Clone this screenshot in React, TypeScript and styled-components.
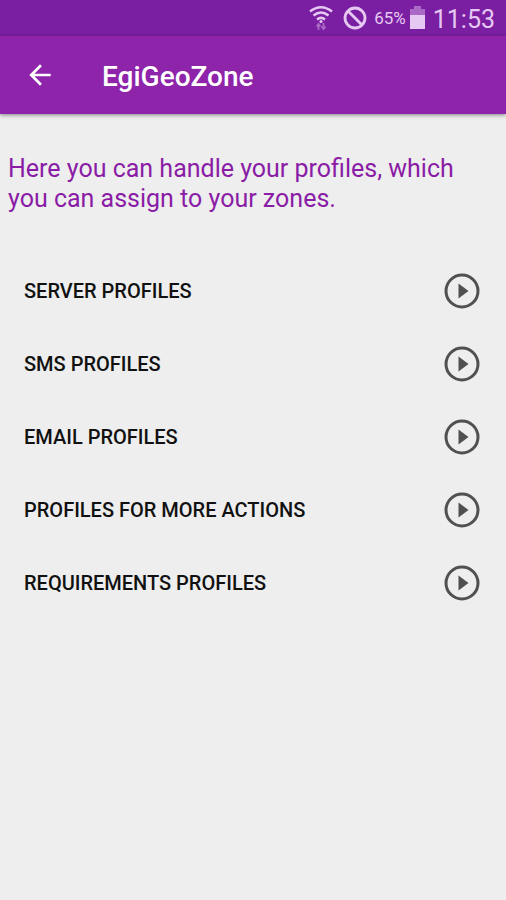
import React from "react";
import styled, { createGlobalStyle } from "styled-components";

const GlobalStyle = createGlobalStyle`
  *, *::before, *::after { box-sizing: border-box; }
  body {
    margin: 0;
    background: #eeeeee;
    font-family: Roboto, "Liberation Sans", sans-serif;
  }
`;

const Screen = styled.div`
  min-height: 100vh;
  background: #eeeeee;
`;

const StatusBar = styled.div`
  display: flex;
  align-items: center;
  justify-content: flex-end;
  height: 36px;
  padding: 0 11px;
  background: #7b1fa2;
  color: #e6c9f2;
`;

const StatusIcon = styled.svg<{ $gap: number }>`
  display: block;
  flex: none;
  margin-right: ${({ $gap }) => $gap}px;
`;

const BatteryLevel = styled.span`
  margin-right: 4px;
  font-size: 17px;
  line-height: 24px;
`;

const Clock = styled.time`
  padding-top: 4px;
  font-size: 25px;
  line-height: 32px;
`;

const AppBar = styled.header`
  display: flex;
  align-items: center;
  gap: 46px;
  height: 78px;
  padding: 0 24px;
  background: #8e24aa;
  color: #ffffff;
  box-shadow: 0 1px 4px rgba(0, 0, 0, 0.45);
`;

const BackButton = styled.button`
  display: flex;
  padding: 0;
  border: 0;
  background: none;
  color: inherit;
  cursor: pointer;
`;

const Title = styled.h1`
  margin: 0;
  padding-top: 4px;
  font-size: 28px;
  font-weight: 500;
  line-height: 32px;
`;

const Main = styled.main`
  padding: 40px 8px;
`;

const Intro = styled.p`
  margin: 0 0 40px;
  color: #8a1ca6;
  font-size: 25px;
  line-height: 30px;
`;

const ProfileList = styled.ul`
  margin: 0;
  padding: 0;
  list-style: none;
`;

const ProfileButton = styled.button`
  display: flex;
  align-items: center;
  justify-content: space-between;
  width: 100%;
  height: 73px;
  padding: 0 17px 0 16px;
  border: 0;
  background: none;
  color: #111111;
  font: 500 20px/24px Roboto, "Liberation Sans", sans-serif;
  text-align: left;
  cursor: pointer;
`;

const PlayIcon = () => (
  <svg width="38" height="38" viewBox="0 0 38 38" aria-hidden="true">
    <circle cx="19" cy="19" r="16" fill="none" stroke="#505050" strokeWidth="3" />
    <path d="M15.500 11.500v15l10-7.500z" fill="#505050" />
  </svg>
);

const profiles = [
  "SERVER PROFILES",
  "SMS PROFILES",
  "EMAIL PROFILES",
  "PROFILES FOR MORE ACTIONS",
  "REQUIREMENTS PROFILES",
];

export default function App() {
  return (
    <Screen>
      <GlobalStyle />
      <StatusBar>
        <StatusIcon $gap={10} width="24" height="26" viewBox="0 0 24 26" aria-hidden="true">
          <g fill="none" stroke="currentColor" strokeWidth="2.5">
            <path d="M1 6.5q11-8.5 22 0M4.5 10.5q7.5-6 15 0M8 14.5q4-3.2 8 0" />
          </g>
          <circle cx="12" cy="16.5" r="1.5" fill="currentColor" />
          <path
            d="M9.5 25v-6m-2 2.5 2-2.5 2 2.500M14.5 18v6m-2-2.5 2 2.5 2-2.5"
            fill="none"
            stroke="#a969c4"
            strokeWidth="1.8"
          />
        </StatusIcon>
        <StatusIcon $gap={7} width="24" height="24" viewBox="0 0 24 24" aria-hidden="true">
          <g fill="none" stroke="currentColor" strokeWidth="2.8">
            <circle cx="12" cy="12" r="10" />
            <path d="M5 5l14 14" />
          </g>
        </StatusIcon>
        <BatteryLevel>65%</BatteryLevel>
        <StatusIcon $gap={8} width="15" height="24" viewBox="0 0 15 24" aria-hidden="true">
          <path d="M4 0h7v3h4v6H0V3h4z" fill="#a969c4" />
          <path d="M0 9h15v14H0z" fill="currentColor" />
        </StatusIcon>
        <Clock>11:53</Clock>
      </StatusBar>
      <AppBar>
        <BackButton type="button" aria-label="Back">
          <svg width="32" height="32" viewBox="0 0 24 24" aria-hidden="true">
            <path d="M20 11H7.83l5.59-5.59L12 4l-8 8 8 8 1.41-1.41L7.83 13H20z" fill="currentColor" />
          </svg>
        </BackButton>
        <Title>EgiGeoZone</Title>
      </AppBar>
      <Main>
        <Intro>Here you can handle your profiles, which you can assign to your zones.</Intro>
        <ProfileList>
          {profiles.map((name) => (
            <li key={name}>
              <ProfileButton type="button">
                {name}
                <PlayIcon />
              </ProfileButton>
            </li>
          ))}
        </ProfileList>
      </Main>
    </Screen>
  );
}
